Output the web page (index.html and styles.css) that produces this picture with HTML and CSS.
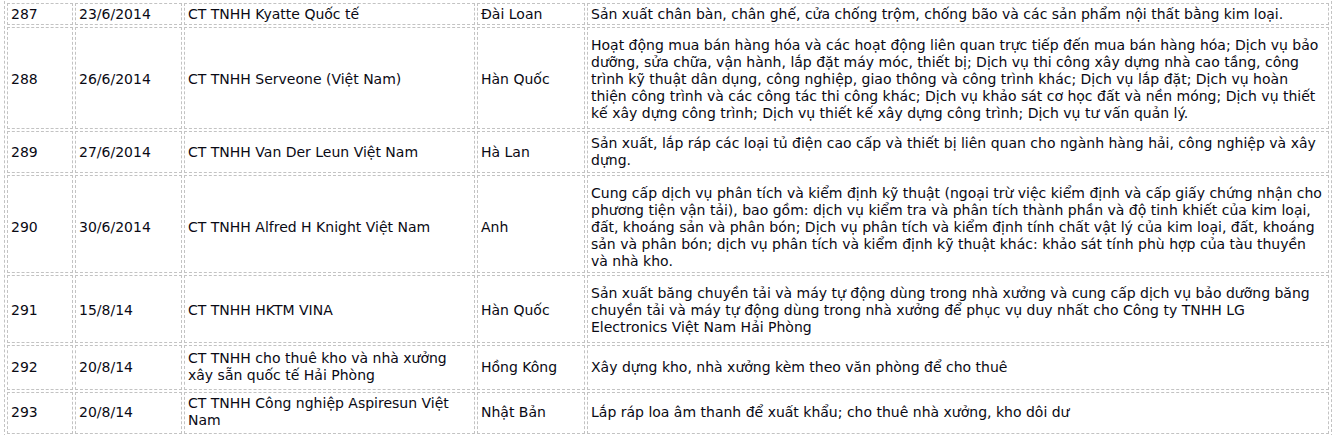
FILE: index.html
```html
<!DOCTYPE html>
<html lang="vi">
<head>
<meta charset="utf-8">
<title>Danh sách doanh nghiệp</title>
<link rel="stylesheet" href="styles.css">
</head>
<body>
<table class="list">
  <colgroup>
    <col class="c-no">
    <col class="c-date">
    <col class="c-name">
    <col class="c-country">
    <col class="c-desc">
  </colgroup>
  <tbody>
    <tr class="row-a">
      <td>287</td>
      <td>23/6/2014</td>
      <td>CT TNHH Kyatte Quốc tế</td>
      <td>Đài Loan</td>
      <td>Sản xuất chân bàn, chân ghế, cửa chống trộm, chống bão và các sản phẩm nội thất bằng kim loại.</td>
    </tr>
    <tr class="row-b">
      <td>288</td>
      <td>26/6/2014</td>
      <td>CT TNHH Serveone (Việt Nam)</td>
      <td>Hàn Quốc</td>
      <td>Hoạt động mua bán hàng hóa và các hoạt động liên quan trực tiếp đến mua bán hàng hóa; Dịch vụ bảo dưỡng, sửa chữa, vận hành, lắp đặt máy móc, thiết bị; Dịch vụ thi công xây dựng nhà cao tầng, công trình kỹ thuật dân dụng, công nghiệp, giao thông và công trình khác; Dịch vụ lắp đặt; Dịch vụ hoàn thiện công trình và các công tác thi công khác; Dịch vụ khảo sát cơ học đất và nền móng; Dịch vụ thiết kế xây dựng công trình; Dịch vụ thiết kế xây dựng công trình; Dịch vụ tư vấn quản lý.</td>
    </tr>
    <tr class="row-c">
      <td>289</td>
      <td>27/6/2014</td>
      <td>CT TNHH Van Der Leun Việt Nam</td>
      <td>Hà Lan</td>
      <td>Sản xuất, lắp ráp các loại tủ điện cao cấp và thiết bị liên quan cho ngành hàng hải, công nghiệp và xây dựng.</td>
    </tr>
    <tr class="row-d">
      <td>290</td>
      <td>30/6/2014</td>
      <td>CT TNHH Alfred H Knight Việt Nam</td>
      <td>Anh</td>
      <td>Cung cấp dịch vụ phân tích và kiểm định kỹ thuật (ngoại trừ việc kiểm định và cấp giấy chứng nhận cho phương tiện vận tải), bao gồm: dịch vụ kiểm tra và phân tích thành phần và độ tinh khiết của kim loại, đất, khoáng sản và phân bón; Dịch vụ phân tích và kiểm định tính chất vật lý của kim loại, đất, khoáng sản và phân bón; dịch vụ phân tích và kiểm định kỹ thuật khác: khảo sát tính phù hợp của tàu thuyền và nhà kho.</td>
    </tr>
    <tr class="row-b">
      <td>291</td>
      <td>15/8/14</td>
      <td>CT TNHH HKTM VINA</td>
      <td>Hàn Quốc</td>
      <td>Sản xuất băng chuyền tải và máy tự động dùng trong nhà xưởng và cung cấp dịch vụ bảo dưỡng băng chuyền tải và máy tự động dùng trong nhà xưởng để phục vụ duy nhất cho Công ty TNHH LG Electronics Việt Nam Hải Phòng</td>
    </tr>
    <tr class="row-e">
      <td>292</td>
      <td>20/8/14</td>
      <td>CT TNHH cho thuê kho và nhà xưởng xây sẵn quốc tế Hải Phòng</td>
      <td>Hồng Kông</td>
      <td>Xây dựng kho, nhà xưởng kèm theo văn phòng để cho thuê</td>
    </tr>
    <tr class="row-f">
      <td>293</td>
      <td>20/8/14</td>
      <td>CT TNHH Công nghiệp Aspiresun Việt Nam</td>
      <td>Nhật Bản</td>
      <td>Lắp ráp loa âm thanh để xuất khẩu; cho thuê nhà xưởng, kho dôi dư</td>
    </tr>
  </tbody>
</table>
</body>
</html>
```
FILE: styles.css
```css
html, body {
  margin: 0;
  padding: 0;
  background: #ffffff;
}

body {
  font-family: "DejaVu Sans", Verdana, sans-serif;
  font-size: 14px;
  line-height: 17px;
  color: #0a0a14;
}

.list {
  margin: 1px 0 0 4px;
  width: 1328px;
  table-layout: fixed;
  border-collapse: separate;
  border-spacing: 2px;
  border: 1px dashed #c3c3c3;
  border-top: 0;
}

.c-no { width: 66px; }
.c-date { width: 107px; }
.c-name { width: 291px; }
.c-country { width: 108px; }
.c-desc { width: 742px; }

.list td {
  border: 1px dashed #c3c3c3;
  padding: 2px 3px;
  vertical-align: middle;
  text-align: left;
}

.row-a td { padding-top: 2px; padding-bottom: 1px; }
.row-b td { padding-top: 9px; padding-bottom: 6px; }
.row-c td { padding-top: 3px; padding-bottom: 3px; }
.row-d td { padding-top: 9px; padding-bottom: 2px; }
.row-e td { padding-top: 4px; padding-bottom: 5px; }
.row-f td { padding-top: 2px; padding-bottom: 4px; }
```
